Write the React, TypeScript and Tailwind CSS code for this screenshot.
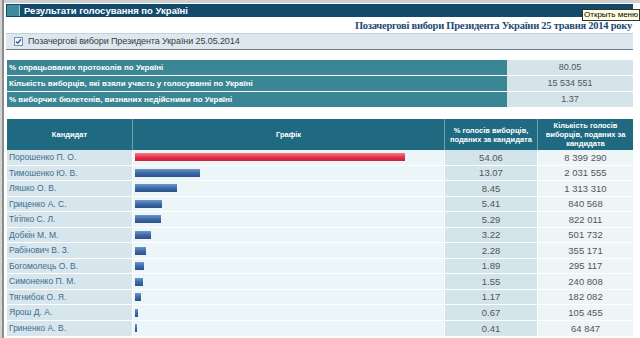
import React from 'react';

const summary = [
  { label: '% опрацьованих протоколів по Україні', value: '80.05' },
  { label: 'Кількість виборців, які взяли участь у голосуванні по Україні', value: '15 534 551' },
  { label: '% виборчих бюлетенів, визнаних недійсними по Україні', value: '1.37' },
];

const candidates = [
  { name: 'Порошенко П. О.', pct: 54.06, votes: '8 399 290' },
  { name: 'Тимошенко Ю. В.', pct: 13.07, votes: '2 031 555' },
  { name: 'Ляшко О. В.', pct: 8.45, votes: '1 313 310' },
  { name: 'Гриценко А. С.', pct: 5.41, votes: '840 568' },
  { name: 'Тігіпко С. Л.', pct: 5.29, votes: '822 011' },
  { name: 'Добкін М. М.', pct: 3.22, votes: '501 732' },
  { name: 'Рабінович В. З.', pct: 2.28, votes: '355 171' },
  { name: 'Богомолець О. В.', pct: 1.89, votes: '295 117' },
  { name: 'Симоненко П. М.', pct: 1.55, votes: '240 808' },
  { name: 'Тягнибок О. Я.', pct: 1.17, votes: '182 082' },
  { name: 'Ярош Д. А.', pct: 0.67, votes: '105 455' },
  { name: 'Гриненко А. В.', pct: 0.41, votes: '64 847' },
];

const sans = { fontFamily: '"Liberation Sans", Arial, sans-serif' };

export default function App() {
  return (
    <div className="relative w-[640px] h-[338px] overflow-hidden bg-white flex" style={sans}>
      {/* left frame */}
      <div className="w-[2px] shrink-0 bg-[#d2d2d2]" />
      <div className="w-[2px] shrink-0 bg-[#8c8c8c]" />

      <div className="flex-1 flex flex-col">
        <div className="h-[3px] bg-[#cfcfcf]" />
        <div className="pl-[2px] pr-[7px] pt-[1px]">
          {/* title bar */}
          <div className="h-[13px] bg-[#124a6c] flex items-center pl-[1px]">
            <div className="w-[13px] h-[11px] bg-[#3d8b9b] border-r border-[#9cc4cc]" />
            <span className="ml-[4px] text-[9.5px] font-bold text-white leading-none">
              Результати голосування по Україні
            </span>
          </div>

          {/* subtitle */}
          <div
            className="h-[16px] flex items-end justify-end pr-[1px] pb-[2px] text-[10.5px] tracking-[-0.25px] font-bold text-[#1c4b74] leading-none"
            style={{ fontFamily: '"Liberation Serif", "Times New Roman", serif' }}
          >
            Позачергові вибори Президента України 25 травня 2014 року
          </div>

          {/* election band */}
          <div className="h-[17px] bg-[#dde7ef] border-t border-[#c5d0d8] border-b border-b-[#6f7f8a] flex items-center pl-[8px]">
            <svg width="9" height="9" viewBox="0 0 9 9" className="shrink-0">
              <rect x="0.5" y="0.5" width="8" height="8" fill="#f4f7fb" stroke="#7a8fa8" />
              <path d="M2 4.5 L3.8 6.3 L7 2.3" fill="none" stroke="#2f5f9a" strokeWidth="1.4" />
            </svg>
            <span className="ml-[5px] text-[9px] tracking-[-0.1px] text-[#3b3b3b] leading-none">
              Позачергові вибори Президента України 25.05.2014
            </span>
          </div>

          {/* summary */}
          <div className="mt-[10px] flex flex-col gap-[1px] pl-[1px]">
            {summary.map((s) => (
              <div key={s.label} className="h-[15px] flex">
                <div className="w-[500px] bg-[#3b8694] flex items-center pl-[2px] text-[8px] font-bold text-white leading-none">
                  {s.label}
                </div>
                <div className="flex-1 bg-[#d4e4ea] flex items-center justify-center text-[9px] text-[#555] leading-none">
                  {s.value}
                </div>
              </div>
            ))}
          </div>

          {/* results table */}
          <div className="mt-[12px] pl-[1px]">
            <div className="grid grid-cols-[126px_312px_93px_95px] h-[31px] bg-[#1f6a80] text-white font-bold text-[7.5px] leading-[9px] text-center">
              <div className="flex items-center justify-center border-r border-[#6aa3b2]">Кандидат</div>
              <div className="flex items-center justify-center border-r border-[#6aa3b2]">Графік</div>
              <div className="flex items-center justify-center border-r border-[#6aa3b2] px-[3px]">
                % голосів виборців, поданих за кандидата
              </div>
              <div className="flex items-center justify-center px-[5px]">
                Кількість голосів виборців, поданих за кандидата
              </div>
            </div>
            {candidates.map((c, i) => (
              <div
                key={c.name}
                className="grid grid-cols-[126px_312px_93px_95px] h-[15.55px] border-b border-white leading-none"
              >
                <div className="bg-[#d6e6ec] border-r border-white flex items-center pl-[2px] text-[8.5px] text-[#3f6d8e]">
                  {c.name}
                </div>
                <div className="bg-[#ecf5f7] border-r border-white flex items-center pl-[2px]">
                  <div
                    className={
                      i === 0
                        ? 'h-[8px] bg-gradient-to-b from-[#f5788a] via-[#e8304a] to-[#c8203a]'
                        : 'h-[8px] bg-gradient-to-b from-[#6f97cc] via-[#3d6aa8] to-[#28528a]'
                    }
                    style={{ width: `${Math.max(c.pct * 5, 2)}px` }}
                  />
                </div>
                <div className="bg-[#d3e4ea] border-r border-white flex items-center justify-center text-[9.5px] text-[#555]">
                  {c.pct.toFixed(2)}
                </div>
                <div className="bg-[#edf5f7] flex items-center justify-center text-[9.5px] text-[#555]">{c.votes}</div>
              </div>
            ))}
          </div>
        </div>
      </div>

      {/* tooltip */}
      <div className="absolute left-[582px] top-[9px] h-[12px] px-[1px] bg-[#ffffe1] border border-[#333] text-[8px] text-black leading-none whitespace-nowrap flex items-center">
        Открыть меню
      </div>
    </div>
  );
}
